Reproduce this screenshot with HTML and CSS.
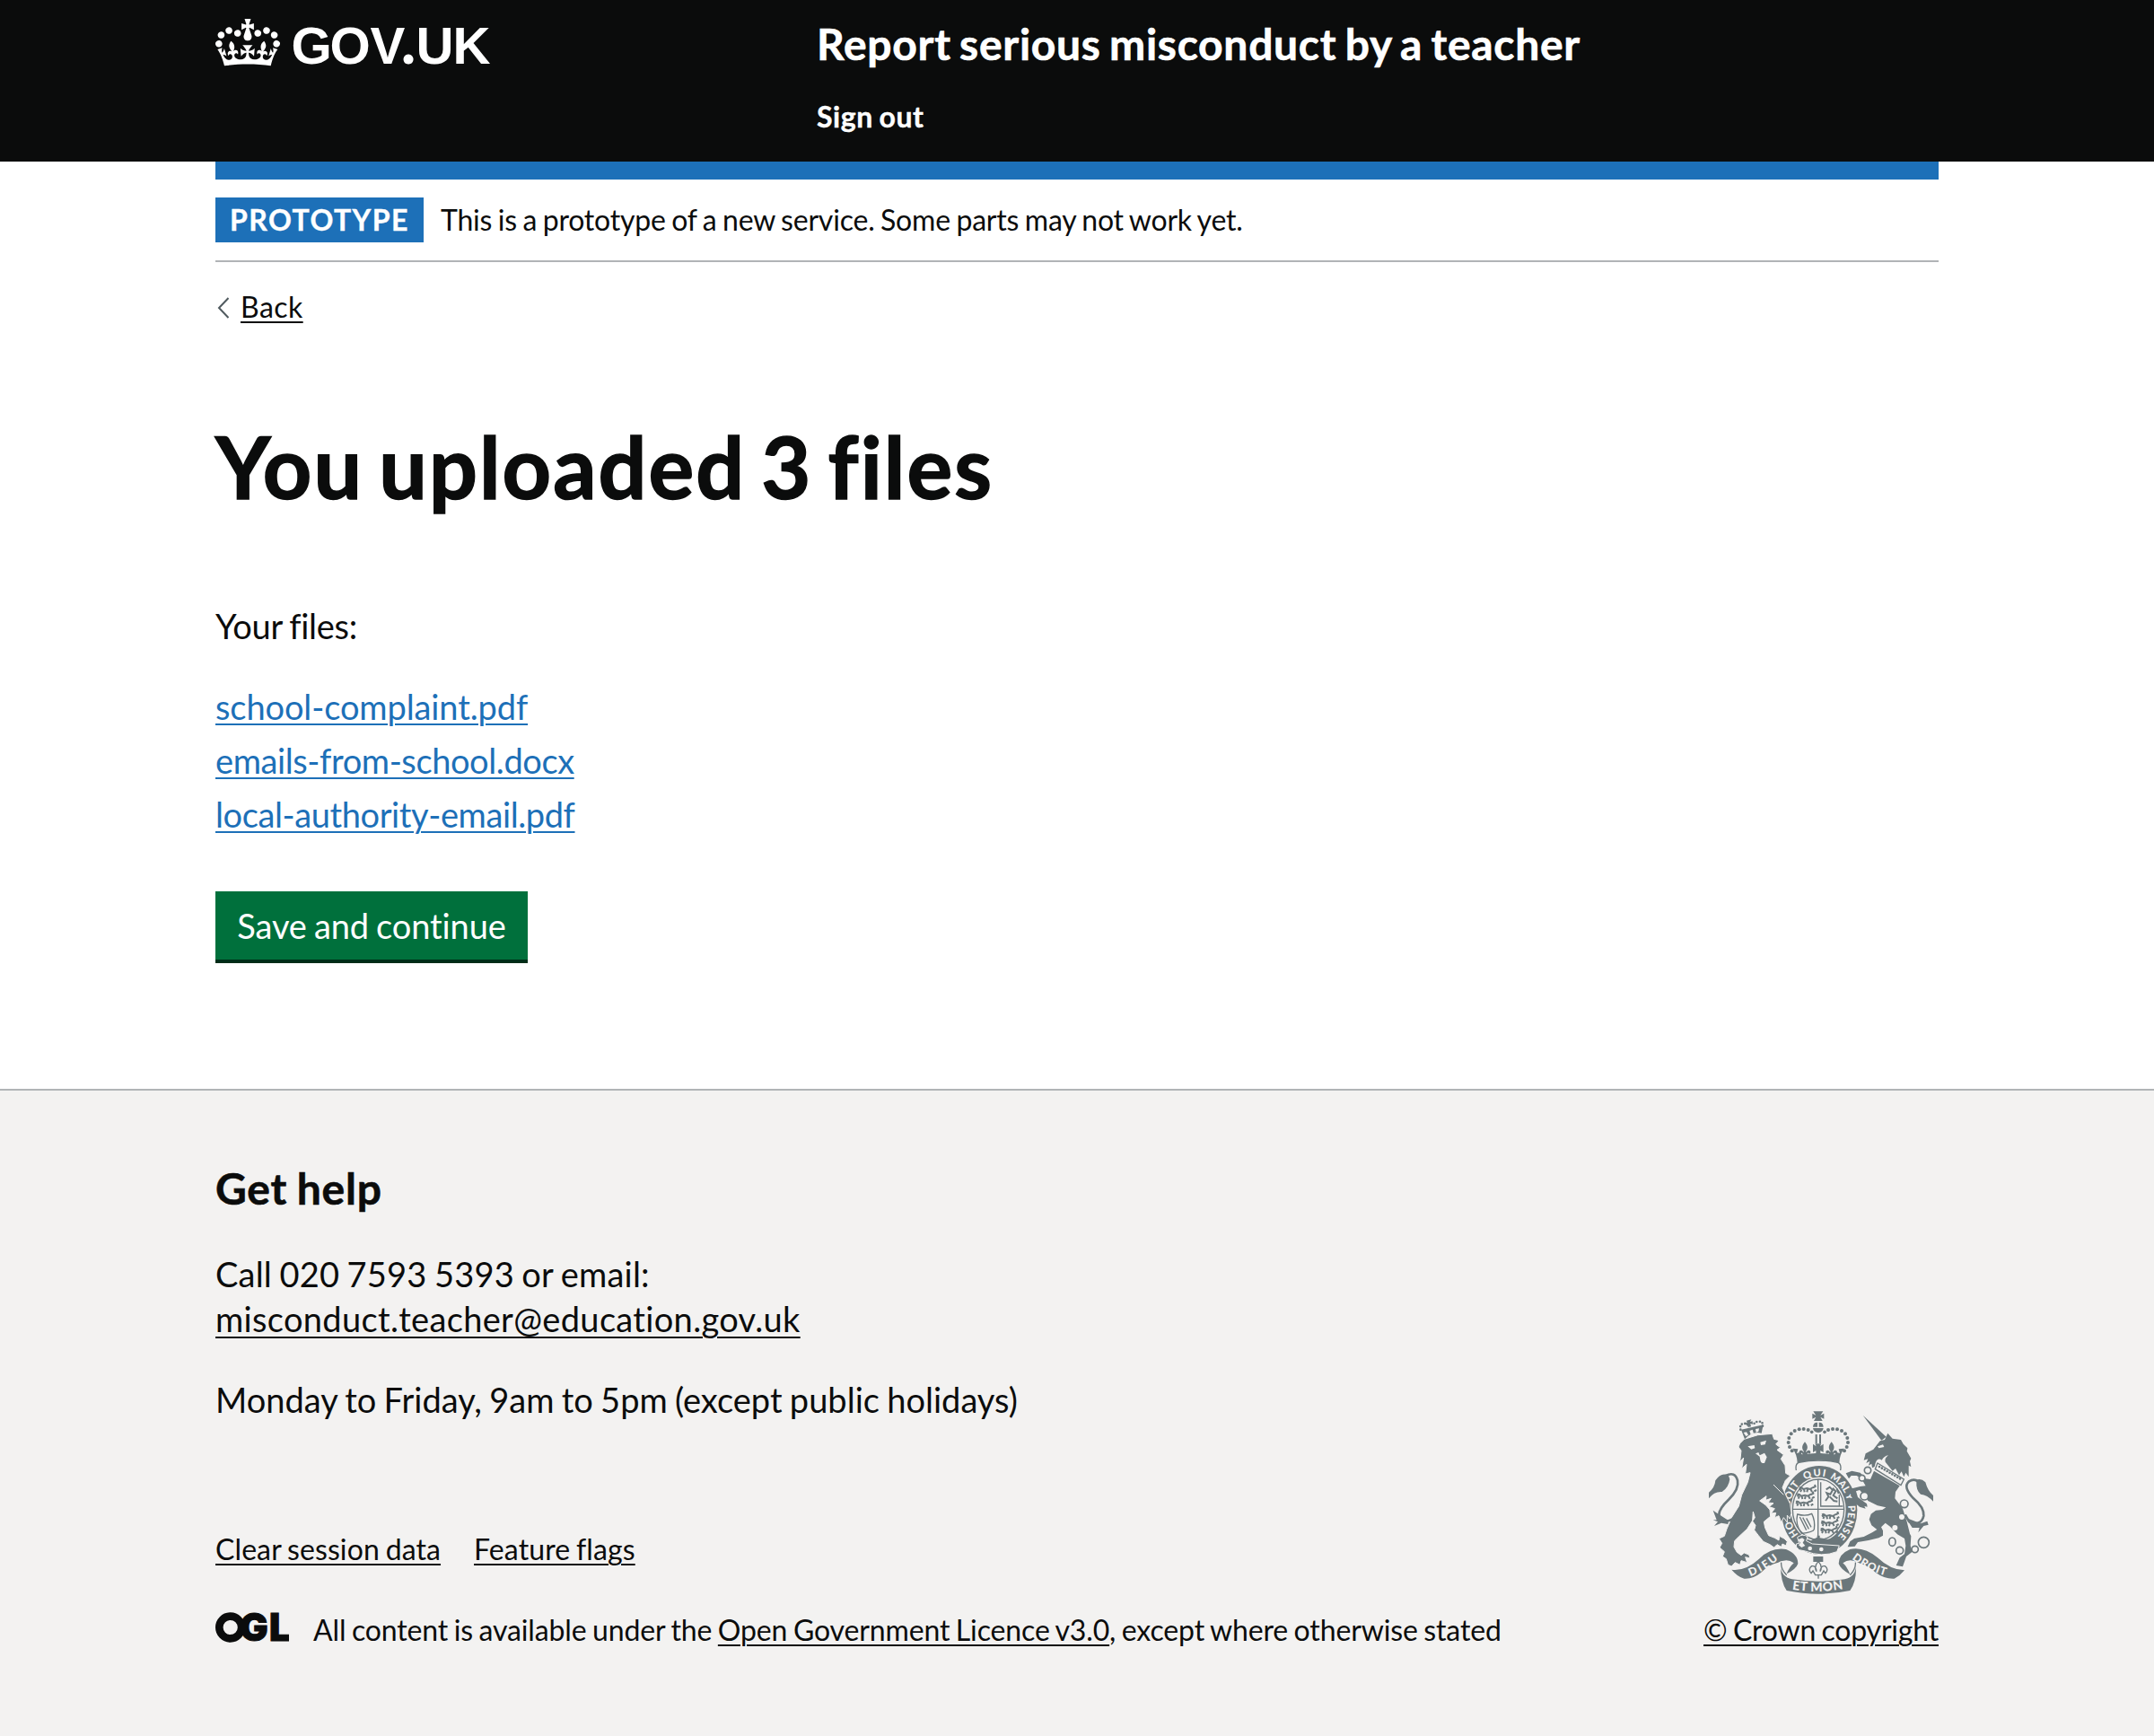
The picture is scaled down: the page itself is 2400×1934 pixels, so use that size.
FILE: index.html
```
<!DOCTYPE html>
<html lang="en">
<head>
<meta charset="utf-8">
<title>You uploaded 3 files</title>
<link rel="stylesheet" href="styles.css">
</head>
<body>
<header class="header">
  <div class="container header-grid">
    <a class="logo" href="#">
      <svg class="logo-svg" viewBox="0 0 310 80" role="img" aria-label="GOV.UK">
        <g transform="translate(0 7) scale(.5455)">
          <path d="M25 30.2c3.5 1.5 7.7-.2 9.1-3.7 1.5-3.6-.2-7.8-3.9-9.2-3.6-1.4-7.6.3-9.1 3.9-1.4 3.5.3 7.5 3.9 9zM9 39.5c3.6 1.5 7.8-.2 9.2-3.7 1.5-3.6-.2-7.8-3.9-9.1-3.6-1.5-7.6.2-9.1 3.8-1.4 3.5.3 7.5 3.8 9zM4.4 57.2c3.5 1.5 7.7-.2 9.1-3.8 1.5-3.6-.2-7.7-3.9-9.1-3.5-1.5-7.6.3-9.1 3.8-1.4 3.5.3 7.6 3.9 9.1zm38.3-21.4c3.5 1.5 7.7-.2 9.1-3.8 1.5-3.6-.2-7.7-3.9-9.1-3.6-1.5-7.6.3-9.1 3.8-1.3 3.6.4 7.7 3.9 9.1zm64.4-5.6c-3.6 1.5-7.8-.2-9.1-3.7-1.5-3.6.2-7.8 3.8-9.2 3.6-1.4 7.7.3 9.2 3.9 1.3 3.5-.4 7.5-3.9 9zm15.9 9.3c-3.6 1.5-7.7-.2-9.1-3.7-1.5-3.6.2-7.8 3.7-9.1 3.6-1.5 7.7.2 9.2 3.8 1.5 3.5-.3 7.5-3.8 9zm4.7 17.7c-3.6 1.5-7.8-.2-9.2-3.8-1.5-3.6.2-7.7 3.9-9.1 3.6-1.5 7.7.3 9.2 3.8 1.3 3.5-.4 7.6-3.9 9.1zM89.3 35.8c-3.6 1.5-7.8-.2-9.2-3.8-1.4-3.6.2-7.7 3.9-9.1 3.6-1.5 7.7.3 9.2 3.8 1.4 3.6-.3 7.7-3.9 9.1zM69.7 17.7l8.9 4.7V9.3l-8.9 2.8c-.2-.3-.5-.6-.9-.9L72.4 0H59.6l3.5 11.2c-.3.3-.6.5-.9.9l-8.8-2.8v13.1l8.8-4.7c.3.3.6.7.9.9l-5 15.4v.1c-.2.8-.4 1.6-.4 2.4 0 4.1 3.1 7.5 7 8.1h.2c.3 0 .7.1 1 .1.4 0 .7 0 1-.1h.2c4-.6 7.1-4.1 7.1-8.1 0-.8-.1-1.7-.4-2.4V34l-5.1-15.4c.4-.2.7-.6 1-.9zM66 92.8c16.9 0 32.8 1.1 47.1 3.2 4-16.9 8.9-26.7 14-33.5l-9.6-3.4c1 4.9 1.1 7.2 0 10.2-1.5-1.4-3-4.3-4.2-8.7L108.6 76c2.8-2 5-3.2 7.5-3.3-4.4 9.4-10 11.9-13.6 11.2-4.3-.8-6.3-4.6-5.6-7.9 1-4.7 5.7-5.9 8-.5 4.3-8.7-3-11.4-7.6-8.8 7.1-7.2 7.9-13.5 2.1-21.1-8 6.1-8.1 12.3-4.5 20.8-4.7-5.4-12.1-2.5-9.5 6.2 3.4-5.2 7.9-2 7.2 3.1-.6 4.3-6.4 7.8-13.5 7.2-10.3-.9-10.9-8-11.2-13.8 2.5-.5 7.1 1.8 11 7.3L80.2 60c-4.1 4.4-8 5.3-12.3 5.4 1.4-4.4 8-11.6 8-11.6H55.5s6.4 7.2 7.9 11.6c-4.2-.1-8-1-12.3-5.4l1.4 16.4c3.9-5.5 8.5-7.7 10.9-7.3-.3 5.8-.9 12.8-11.1 13.8-7.2.6-12.9-2.9-13.5-7.2-.7-5 3.8-8.3 7.1-3.1 2.7-8.7-4.6-11.6-9.4-6.2 3.7-8.5 3.6-14.7-4.6-20.8-5.8 7.6-5 13.9 2.2 21.1-4.7-2.6-11.9.1-7.7 8.8 2.3-5.5 7.1-4.2 8.1.5.7 3.3-1.3 7.1-5.7 7.9-3.5.7-9-1.8-13.5-11.2 2.5.1 4.7 1.3 7.5 3.3l-4.7-15.4c-1.2 4.4-2.7 7.2-4.3 8.7-1.1-3-.9-5.3 0-10.2l-9.5 3.4c5 6.9 9.9 16.7 14 33.5 14.8-2.1 30.8-3.2 47.7-3.2z"/>
        </g>
        <text class="logo-text" y="57"><tspan x="84.5">G</tspan><tspan x="127.5">O</tspan><tspan x="172.500">V</tspan><tspan class="logo-dot" x="206.500">.</tspan><tspan x="223.5">U</tspan><tspan x="264.500">K</tspan></text>
      </svg>
    </a>
    <div class="header-content">
      <a class="service-name" href="#">Report serious misconduct by a teacher</a>
      <a class="sign-out" href="#">Sign out</a>
    </div>
  </div>
</header>
<div class="container">
  <div class="blue-bar"></div>
  <div class="phase">
    <strong class="tag">PROTOTYPE</strong>
    <span class="phase-text">This is a prototype of a new service. Some parts may not work yet.</span>
  </div>
  <div class="back">
    <svg class="back-arrow" viewBox="0 0 14 24"><path d="M13.500 1 3 12l10.500 11"/></svg>
    <a class="back-link" href="#">Back</a>
  </div>
  <main class="main">
    <h1 class="title">You uploaded 3 files</h1>
    <p class="body files-label">Your files:</p>
    <ul class="files">
      <li><a class="file file-school" href="#">school-complaint.pdf</a></li>
      <li><a class="file" href="#">emails-from-school.docx</a></li>
      <li><a class="file" href="#">local-authority-email.pdf</a></li>
    </ul>
    <button class="button" type="button">Save and continue</button>
  </main>
</div>
<footer class="footer">
  <div class="container">
    <h2 class="help-title">Get help</h2>
    <p class="body help-call">Call 020 7593 5393 or email:<br><a class="help-email" href="#">misconduct.teacher@education.gov.uk</a></p>
    <p class="body help-hours">Monday to Friday, 9am to 5pm (except public holidays)</p>
    <div class="meta">
      <div class="meta-main">
        <div class="meta-links"><a href="#">Clear session data</a><a href="#">Feature flags</a></div>
        <div class="licence">
          <svg class="ogl" viewBox="0 0 82 34" role="img" aria-label="OGL">
            <circle cx="16.700" cy="17" r="12.400"/>
            <text y="32"><tspan x="27">G</tspan><tspan x="60">L</tspan></text>
          </svg>
          <span class="licence-text">All content is available under the <a href="#">Open Government Licence v3.0</a>, except where otherwise stated</span>
        </div>
      </div>
      <div class="copyright">
        <svg class="crest" viewBox="42 30 750 612" aria-hidden="true">
          <defs>
            <path id="garter" d="M410 475A98 114 0 0 1 410 247A98 114 0 0 1 410 475"/>
            <path id="motto-left" d="M181 582Q232 564 286 516"/>
            <path id="motto-mid" d="M320 626Q407 640 496 624"/>
            <path id="motto-right" d="M520 524Q576 568 644 583"/>
            <g id="fleur"><path d="M0-22C12-8 10 2 3 10L4 12C12 2 20 6 19 14C18 19 10 18 10 14C8 18 7 20 7 26H-7C-7 20-8 18-10 14C-10 18-18 19-19 14C-20 6-12 2-4 12L-3 10C-10 2-12-8 0-22Z"/></g>
            <g id="passant"><path class="line heavy" d="M0 8l8-6 6 5 12-3 10 3 10-6M8 8l-4 8M16 8l2 9M28 8l-2 9M38 7l5 9M0 2l6-2M46 2l8-4-2-6M50 14l8-4"/></g>
          </defs>

          <!-- crown -->
          <path d="M391 31h33l-9 13 12-6v18l-12-6 7 13h-29l7-13-12 6V38l12 6zM405 68v15h-15q1-16 15-15zM410 68q14-1 15 15h-15zM390 87h35q-2 14-17 15-16-1-18-15z"/>
          <path d="M398 108h6v30h-6zM411 108h6v30h-6zM390 140l11 8-4-9h21l-4 9 11-8v28l-10-6v12h-15v-12l-10 6z"/>
          <g>
            <circle cx="386" cy="100" r="5.500"/><circle cx="374" cy="93" r="6"/><circle cx="359" cy="90" r="6"/><circle cx="344" cy="91" r="6"/><circle cx="329" cy="96" r="6"/><circle cx="317" cy="106" r="6"/><circle cx="310" cy="120" r="6"/><circle cx="308" cy="135" r="6"/><circle cx="312" cy="150" r="6"/><circle cx="320" cy="163" r="6"/>
            <circle cx="429" cy="100" r="5.500"/><circle cx="441" cy="93" r="6"/><circle cx="456" cy="90" r="6"/><circle cx="471" cy="91" r="6"/><circle cx="486" cy="96" r="6"/><circle cx="498" cy="106" r="6"/><circle cx="505" cy="120" r="6"/><circle cx="507" cy="135" r="6"/><circle cx="503" cy="150" r="6"/><circle cx="495" cy="163" r="6"/>
          </g>
          <use href="#fleur" x="363" y="155"/><use href="#fleur" x="452" y="155"/>
          <path d="M322 155l18 2-4 14 12-4q4 12 15 7l45-4 45 4q11 5 15-7l12 4-4-14 18-2q-15 20-16 48-71-18-140 0-1-28-16-48z"/>
          <path class="line" d="M334 228q-4-22 9-26 64-14 130 0 13 4 9 26"/>

          <!-- garter and shield -->
          <ellipse cx="411" cy="361" rx="127" ry="148"/>
          <ellipse class="paper" cx="408" cy="359" rx="92" ry="108"/>
          <g class="line">
            <ellipse cx="408" cy="359" rx="86" ry="101"/>
            <path d="M407 258v202M322 358h172"/>
            <path d="M416 268v80h74M478 310v38"/>
            <path d="M338 375q-8 34 14 64 38-4 42-14 4-30-8-52-20 10-48 2zM346 384l22 44M356 386l20 38M368 388l16 30"/>
            <path class="heavy" d="M432 330l10-14-6-12 12 4 10-18 8 8-8 14 14 10M446 316l14 14 12 2M434 292l12-8 8 8M470 290l6 16"/>
          </g>
          <use href="#passant" x="344" y="284"/><use href="#passant" x="337" y="307"/><use href="#passant" x="333" y="331"/>
          <use href="#passant" x="420" y="374"/><use href="#passant" x="418" y="398"/><use href="#passant" x="416" y="422"/>
          <path d="M384 462l20-10v-6h9v8l26 4 40-6-10 34-30 10-48-10z"/>
          <g class="motto">
            <text><textPath href="#garter" startOffset="78">HO</textPath></text>
            <text><textPath href="#garter" startOffset="180" textLength="80">SOIT</textPath></text>
            <text><textPath href="#garter" startOffset="284" textLength="70">QUI</textPath></text>
            <text><textPath href="#garter" startOffset="370" textLength="98">MAL Y</textPath></text>
            <text><textPath href="#garter" startOffset="484" textLength="112">PENSE</textPath></text>
          </g>
          <path class="edge" d="M338 452q18-14 34-2l-4 14 20 10 90 6-8 20q-50 20-106-2l-20-4q-14-10-10-20l10-2z"/>
          <circle class="paper" cx="380" cy="489" r="7"/><circle class="paper" cx="418" cy="492" r="7"/>
          <path class="paper" d="M340 460l14-6 8 6-6 10 8 10-12 6-10-8 6-8z"/>

          <!-- lion -->
          <path class="edge" d="M160 124L206 110 254 106 260 124 277 128 266 141 281 152 270 160 292 176 283 190 297 212 299 238 314 246 298 262 288 286 300 312 314 340 318 372 312 390 304 378 304 402 292 386 284 402 276 380 262 386 266 370 250 372 262 356 244 350 258 338 240 336 250 322 232 328 234 314 212 330 232 344 246 360 248 382 226 400 230 420 242 446 262 454 276 462 278 448 294 456 304 466 300 480 288 474 284 484 270 476 260 486 246 476 224 466 208 446 194 428 198 412 188 398 196 386 190 366 188 396 170 424 142 450 128 464 126 484 136 502 150 512 160 504 176 510 180 522 164 518 170 536 150 530 146 544 130 536 118 549 106 544 100 524 88 516 94 500 78 486 86 472 76 456 94 448 102 424 118 386 142 348 152 310 172 268 180 236 164 240 168 208 152 222 158 186 146 200 150 162 141 150 146 138Z"/>
          <path class="gap" d="M258 276L292 310"/>
          <path class="paper" d="M172 148l22-4 2 10-12 4zM214 134l20-6-4 14-14 2zM198 172l10-4 4 10 16-8 8 14-8 20q-12 2-14-10l-2-12z"/>
          <path d="M150 92l74-16-6 28q-30-8-56 20z"/>
          <path class="paper" d="M158 102l10-2 6 10-8 4zM178 96l10-4 4 14-10 2zM198 90l12-2-2 10-8 4z"/>
          <path class="beads" d="M148 92q-4-18 10-20 10-2 18 8M222 80q2-16-14-15-12 0-18 12"/>
          <path d="M168 62l16-4-4 8 8-2 1 10-8-2 2 10-10 2-2-10-6 2-1-8 6 2z"/>
          <path class="tail" d="M124 390Q84 412 76 376 76 356 108 326 144 292 138 262 130 230 98 246"/>
          <path d="M108 246Q84 232 64 262 62 286 42 302V322Q60 298 86 300 108 286 112 258ZM56 362l18 12 34 22-2 12-22-4-24 10 12-14-16-6 12 0z"/>

          <!-- unicorn -->
          <path d="M557 44l78 72-16 12z"/>
          <path d="M640 104l16 18 28 4 8 14 14 14-2 10 14 24-4 10 4 18-8-4 0 38-10-14-6 14-8-18-8 12-12-22-10 8-24-30q-4-12 10-22-14 2-22 16-18-12-24 22l-8 4-2-14-10 6 4-14-12 6 6-14-14 4 6-22 26-14 22-28 16-4z"/>
          <path class="paper" d="M606 148l18-6 4 8-18 4z"/>
          <path d="M594 230L680 280 666 300 664 322 690 356 704 400 714 440 718 448 716 480 722 500 702 516 690 550 668 546 680 520 696 508 700 480 696 456 672 442 648 416 632 404 618 418 624 430 624 446 610 454 576 462 540 468 530 482 506 484 514 466 528 456 560 450 588 436 604 426 586 412 578 392 584 374 600 362 622 360 634 352 606 346 574 330 562 312 546 294 534 298 540 318 570 340 572 350 562 348 566 356 546 350 526 334 516 308 514 290 548 282 566 280 552 256 536 246 518 246 510 256 500 238 520 230 548 236 566 256 582 258Z"/>
          <path class="collar" d="M606 204l88 54-10 20-86-54z"/>
          <path class="beads" d="M612 216l72 42"/>
          <g class="roundel">
            <circle cx="573" cy="228" r="11"/><circle cx="554" cy="254" r="10"/><circle cx="562" cy="314" r="13"/><circle cx="695" cy="340" r="13"/>
            <ellipse cx="655" cy="467" rx="11" ry="14"/><circle cx="680" cy="496" r="12"/><circle cx="731" cy="492" r="11"/><circle cx="760" cy="469" r="18"/>
          </g>
          <circle class="paper" cx="687" cy="384" r="9"/><circle class="paper" cx="664" cy="420" r="9"/>
          <path class="tail" d="M698 376l14 24q40 16 48-20 2-28-34-58-36-38-16-56 18-12 32 0"/>
          <path d="M732 262q18-10 34 6 8 30 26 44v20q-20-22-42-24-16-14-14-42zM700 386l22 34 24 0-4 16 18-22 16-4-4-12-22 8z"/>

          <!-- ribbon -->
          <path d="M118 560Q164 566 210 524 250 484 300 492 340 508 340 540 334 558 302 574 312 550 326 538 310 526 292 530 282 530 274 536 244 542 216 570 190 592 160 590 138 584 118 560Z"/>
          <path d="M696 562Q650 562 606 520 560 482 514 492 476 508 476 540 482 558 514 576 504 550 490 538 506 526 524 530 536 532 544 538 574 546 600 570 630 592 662 590 682 580 696 562Z"/>
          <path class="line" d="M284 536Q282 558 302 578M532 536Q534 558 514 578"/>
          <path d="M282 548Q284 584 320 592 408 606 496 592 532 584 534 548 536 600 514 630 410 652 302 630 282 600 282 548Z"/>
          <path d="M391 516h33v18h-33z"/>
          <path class="line" d="M408 532q16 18 6 34 2-20 16-18 14 10 2 24l-6-8-8 14h-20l-8-14-6 8q-12-14 2-24 14-2 16 18-10-16 6-34zM408 576v14"/>
          <g class="motto motto-ribbon">
            <text><textPath href="#motto-left" textLength="110">DIEU</textPath></text>
            <text class="motto-large"><textPath href="#motto-mid" textLength="172">ET MON</textPath></text>
            <text><textPath href="#motto-right" textLength="126">DROIT</textPath></text>
          </g>
        </svg>
        <a class="copyright-link" href="#">© Crown copyright</a>
      </div>
    </div>
  </div>
</footer>
</body>
</html>
```
FILE: styles.css
```
* { box-sizing: border-box; }
body {
  margin: 0;
  min-height: 1934px;
  display: flex;
  flex-direction: column;
  background: #fff;
  color: #0b0c0c;
  font-family: Lato, "Noto Sans", sans-serif;
  font-size: 32px;
  line-height: 40px;
  word-spacing: -1.500px;
  font-variant-ligatures: none;
}
a {
  color: inherit;
  text-decoration: underline;
  text-decoration-thickness: 2px;
  text-underline-offset: 4px;
}
h1, h2, p, ul { margin: 0; padding: 0; }
.container { width: 1920px; margin: 0 auto; }

.header { height: 180px; background: #0b0c0c; color: #fff; }
.header a { text-decoration: none; }
.header-grid { display: grid; grid-template-columns: 670px 1fr; padding-top: 14px; }
.logo { display: block; }
.logo-svg { display: block; width: 310px; height: 80px; fill: #fff; }
.logo-text { font: 700 58.200px "Liberation Sans", sans-serif; }
.logo-dot { font-family: Lato, sans-serif; font-size: 72px; }
.header-content { display: flex; flex-direction: column; padding-top: 5px; }
.service-name {
  font-size: 48px; line-height: 60px; font-weight: 700; word-spacing: -3px;
  letter-spacing: .710px; -webkit-text-stroke: .600px;
}
.sign-out { margin-top: 31px; font-weight: 700; letter-spacing: .550px; -webkit-text-stroke: .400px; }

.blue-bar { height: 20px; background: #1d70b8; }
.phase {
  display: flex; align-items: center;
  height: 92px; padding: 20px 0; border-bottom: 2px solid #b1b4b6;
}
.tag {
  width: 232px; height: 50px; padding: 5px 16px;
  background: #1d70b8; color: #fff; font-weight: 700;
  letter-spacing: 1.460px; -webkit-text-stroke: .400px;
}
.phase-text { margin: -1px 0 0 19px; letter-spacing: -.190px; }
.back { display: flex; align-items: center; margin-top: 29px; }
.back-arrow { width: 14px; height: 24px; margin: 2px 13px 0 1px; fill: none; stroke: #505a5f; stroke-width: 2; }
.back-link { padding-top: 1px; letter-spacing: .450px; }

.main { padding-top: 107px; }
.title {
  font-size: 95px; line-height: 100px; font-weight: 700; word-spacing: -8px;
  letter-spacing: 2.050px; -webkit-text-stroke: 1.500px;
}
.body { font-size: 38px; line-height: 50px; }
.body a, .file { text-underline-offset: 5px; }
.files-label { margin-top: 103px; letter-spacing: -.280px; }
.files { margin-top: 40px; list-style: none; font-size: 38px; line-height: 50px; }
.files li { margin-bottom: 10px; }
.file { color: #1d70b8; letter-spacing: -.400px; text-underline-offset: 4px; }
.file-school { letter-spacing: -.110px; }
.button {
  display: block; width: 348px; height: 76px; margin-top: 61px; padding: 0 0 1px; border: 0;
  background: #00703c; box-shadow: 0 4px 0 #002d18; color: #fff;
  font: 400 38px/50px Lato, sans-serif; letter-spacing: -.110px; word-spacing: -1.500px;
}

.footer { flex: 1; margin-top: 144px; padding-top: 79px; border-top: 2px solid #b1b4b6; background: #f3f2f1; }
.help-title { font-size: 48px; line-height: 60px; font-weight: 700; letter-spacing: .800px; word-spacing: -2px; -webkit-text-stroke: .600px; }
.help-call { margin-top: 40px; letter-spacing: .200px; }
.help-email { letter-spacing: .330px; }
.help-hours { margin-top: 40px; letter-spacing: .020px; }
.meta { display: flex; justify-content: space-between; align-items: flex-end; margin-top: -12px; }
.meta-links { display: flex; gap: 37px; letter-spacing: .100px; }
.licence { display: flex; align-items: center; margin-top: 50px; }
.ogl { width: 82px; height: 34px; margin: -6px 27px 0 0; fill: #0b0c0c; }
.ogl circle { fill: none; stroke: #0b0c0c; stroke-width: 8.600px; }
.ogl text { font: 900 42px Inter, sans-serif; stroke: #0b0c0c; stroke-width: 1px; word-spacing: 0; }
.licence-text { letter-spacing: -.130px; white-space: pre; }
.copyright { display: flex; flex-direction: column; align-items: flex-end; }
.crest { width: 250px; height: 204px; margin: 0 6px 20px 0; fill: #6b777b; }
.copyright-link { letter-spacing: -.200px; }
.paper { fill: #f3f2f1; }
.line { fill: none; stroke: #6b777b; stroke-width: 4px; }
.heavy { stroke-width: 6px; }
.collar { fill: #f3f2f1; stroke: #6b777b; stroke-width: 4px; }
.edge { stroke: #f3f2f1; stroke-width: 3px; }
.gap { fill: none; stroke: #f3f2f1; stroke-width: 3px; }
.tail { fill: none; stroke: #6b777b; stroke-width: 8px; }
.beads { fill: none; stroke: #6b777b; stroke-width: 8px; stroke-linecap: round; stroke-dasharray: 0 10; }
.roundel { fill: #f3f2f1; stroke: #6b777b; stroke-width: 5px; }
.motto { fill: #f3f2f1; font: 900 33px Lato, sans-serif; }
.motto-ribbon { font-size: 37px; }
.motto-large { font-size: 42px; }
```
